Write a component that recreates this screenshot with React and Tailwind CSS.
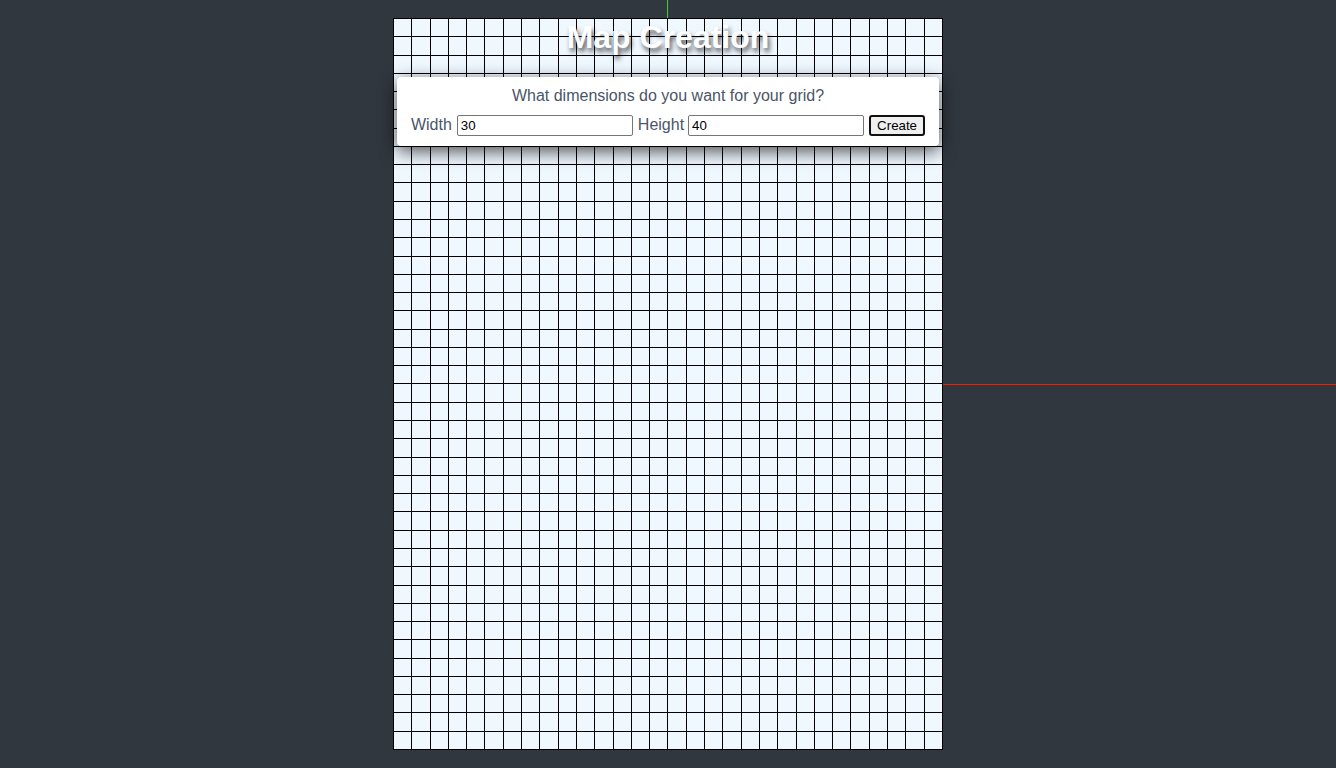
export default function App() {
    const cells = Array.from({ length: 30 * 40 });

    return (
        <div className="relative h-screen w-full bg-[#31373f] flex items-center justify-center overflow-hidden font-['Liberation_Sans',Arial,sans-serif]">
            {/* guide lines */}
            <div className="absolute left-[667px] top-0 h-[18px] w-px bg-[#44cc33]" />
            <div className="absolute left-[943px] right-0 top-[384px] h-px bg-[#ff1a00]" />

            <div className="relative w-[550px] h-[732px]">
                <div className="grid grid-cols-[repeat(30,minmax(0,1fr))] grid-rows-[repeat(40,minmax(0,1fr))] w-full h-full border-l border-t border-black bg-[#eff7ff]">
                    {cells.map((_, i) => (
                        <div key={i} className="border-r border-b border-black" />
                    ))}
                </div>

                <h1 className="absolute inset-x-0 top-[-5px] text-center text-[32px] leading-[48px] font-bold text-white [text-shadow:2px_4px_5px_rgba(0,0,0,0.65)]">
                    Map Creation
                </h1>

                <div className="absolute left-[4px] right-[4px] top-[59px] h-[69px] bg-white rounded-[4px] shadow-[0_5px_18px_rgba(0,0,0,0.7)] pt-[7px] flex flex-col items-center text-[#4a5568]">
                    <p className="text-[16px] leading-[24px]">What dimensions do you want for your grid?</p>
                    <div className="mt-[5px] flex items-center text-[16px] leading-[24px]">
                        <label className="mr-[5px]">Width</label>
                        <input
                            defaultValue="30"
                            className="w-[176px] h-[21px] border border-[#767676] rounded-[2px] px-[3px] pt-px text-[13.3px] text-black bg-white"
                        />
                        <label className="ml-[5px] mr-[4px]">Height</label>
                        <input
                            defaultValue="40"
                            className="w-[176px] h-[21px] border border-[#767676] rounded-[2px] px-[3px] pt-px text-[13.3px] text-black bg-white"
                        />
                        <button className="ml-[5px] w-[56px] h-[21px] border-2 border-[#101010] rounded-[3px] bg-[#efefef] text-[13.3px] text-black leading-none pt-px">
                            Create
                        </button>
                    </div>
                </div>
            </div>
        </div>
    );
}
